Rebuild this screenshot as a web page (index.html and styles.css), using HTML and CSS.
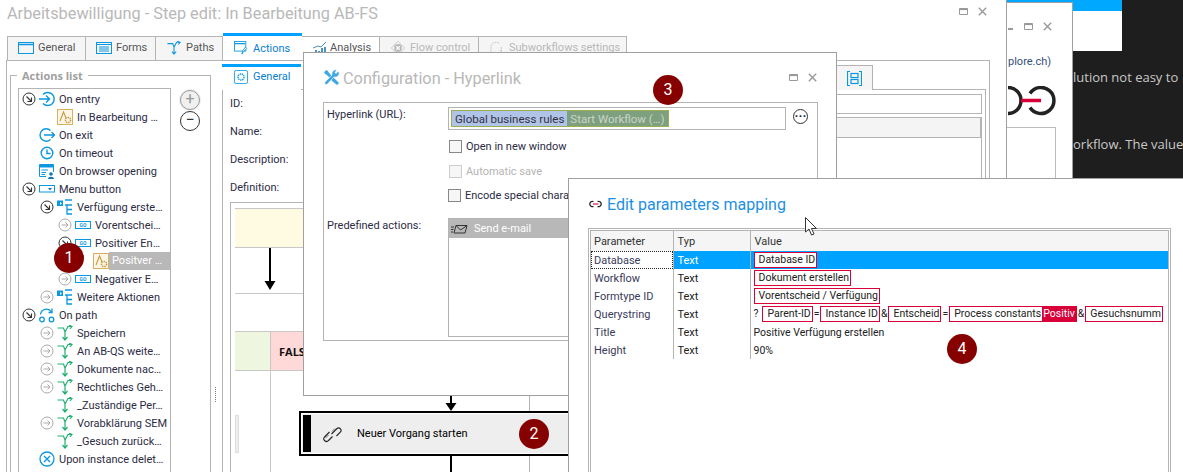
FILE: index.html
```html
<!DOCTYPE html>
<html lang="de">
<head>
    <meta charset="UTF-8">
    <title>Arbeitsbewilligung - Step edit</title>
    <link rel="stylesheet" href="styles.css">
</head>
<body>
<svg class="defs" width="0" height="0">
    <symbol id="exp" viewBox="0 0 14 14"><circle cx="7" cy="7" r="6" fill="#fff" stroke="#333" stroke-width="1"/><path d="M4.5 4.5 9.5 9.5M9.5 5.5V9.5H5.5" fill="none" stroke="#333" stroke-width="1.1"/></symbol>
    <symbol id="col" viewBox="0 0 14 14"><circle cx="7" cy="7" r="6" fill="#fff" stroke="#aaa" stroke-width="1"/><path d="M3.5 7H10M7.5 4.5 10 7 7.5 9.5" fill="none" stroke="#aaa" stroke-width="1"/></symbol>
    <symbol id="entry" viewBox="0 0 16 16"><path d="M4 3.5A6.5 6.5 0 1 1 4 12.5" fill="none" stroke="#0b98e0" stroke-width="1.4"/><path d="M0 8H10.5M7 4.5 10.5 8 7 11.5" fill="none" stroke="#0b98e0" stroke-width="1.4"/></symbol>
    <symbol id="exit" viewBox="0 0 16 16"><path d="M11.5 3.5A6.2 6.2 0 1 0 11.5 12.5" fill="none" stroke="#0b98e0" stroke-width="1.4"/><path d="M5 8H15.5M12.5 5 15.5 8 12.5 11" fill="none" stroke="#0b98e0" stroke-width="1.4"/></symbol>
    <symbol id="clock" viewBox="0 0 16 16"><circle cx="8" cy="8" r="5.8" fill="none" stroke="#0b98e0" stroke-width="1.4"/><path d="M8 4.5V8.5H11.5" fill="none" stroke="#0b98e0" stroke-width="1.4"/></symbol>
    <symbol id="browser" viewBox="0 0 16 16"><path d="M.5 1.5H14.5V9M.5 1.5V13.5H7" fill="none" stroke="#0b98e0"/><path d="M1 2H14V4.5H1Z" fill="#0b98e0"/><path d="M2.5 7H9M2.5 9.5H7M2.5 11.5H6" stroke="#0b98e0"/><circle cx="12" cy="11" r="1.8" fill="#0b78b8"/><path d="M9 16C9 13 15 13 15 16Z" fill="#0b78b8"/></symbol>
    <symbol id="menu" viewBox="0 0 16 8"><rect x=".5" y=".5" width="15" height="6.5" fill="none" stroke="#0b98e0"/><path d="M9 3H13L11 5.5Z" fill="#0b78b8"/></symbol>
    <symbol id="mbar" viewBox="0 0 16 16"><path d="M0 1.5H6V7H0" fill="#0b98e0"/><path d="M3 3 5 4.5 3 6Z" fill="#fff"/><path d="M8 1H15M8 6H15M10 6V15H15M10 10.5H15" fill="none" stroke="#0b98e0" stroke-width="1.3"/></symbol>
    <symbol id="path" viewBox="0 0 16 16"><path d="M.5 3H6.5L8 7V15M5.5 12 8 15 10.5 12M8 7 11 1.5H14M12 0 15 1.5 13 4" fill="none" stroke="currentColor" stroke-width="1.2"/></symbol>
    <symbol id="onpath" viewBox="0 0 16 16"><path d="M1.5 7.5A6 6 0 0 1 12.5 5M9.5 5.5H13V1.5" fill="none" stroke="#0b98e0" stroke-width="1.3"/><circle cx="3" cy="12.5" r="2.3" fill="none" stroke="#0b98e0" stroke-width="1.3"/><circle cx="12.5" cy="12.5" r="2.3" fill="none" stroke="#0b98e0" stroke-width="1.3"/></symbol>
    <symbol id="form" viewBox="0 0 16 16"><rect x=".5" y=".5" width="15" height="15" fill="#fdf6e8" stroke="#d9b060"/><path d="M3 12 6.5 3 9 9" fill="none" stroke="#c99a3e" stroke-width="1.1"/><circle cx="11" cy="11" r="2.6" fill="none" stroke="#c99a3e" stroke-width="1.5" stroke-dasharray="1.5 .8"/></symbol>
    <symbol id="link" viewBox="0 0 20 18"><path d="M8 7 3 12A2.5 2.5 0 0 0 7 15.5L11 11.5M10 9 15.5 3.5A2.5 2.5 0 0 1 19 7L15 11" transform="translate(-.5 0)" fill="none" stroke="#222" stroke-width="1.1"/><path d="M6.5 10 3.5 13M10 6.5 13 3.5" fill="none" stroke="#222" stroke-width=".6"/></symbol>
    <symbol id="chain" viewBox="0 0 15 8"><path d="M5.5 1.5A2.7 2.7 0 1 0 5.5 6.5M9.5 1.5A2.7 2.7 0 1 1 9.5 6.5" fill="none" stroke="#222" stroke-width="1.3"/><path d="M5 4H10.5" stroke="#d9003a" stroke-width="1.1"/></symbol>
    <symbol id="maxi" viewBox="0 0 9 7"><path d="M.5.5H8.5V6.5H.5Z" fill="none" stroke="#999"/><path d="M0 1.5H9" stroke="#999" stroke-width="1.2"/></symbol>
    <symbol id="close" viewBox="0 0 9 9"><path d="M.8.8 8.2 8.2M8.2.8.8 8.2" stroke="#999" stroke-width="1.4"/></symbol>
</svg>

<div class="desktop">
    <!-- window behind, mostly hidden -->
    <div class="back-strip"><div class="back-blue"></div></div>
    <p class="dark-text dt1">lution not easy to</p>
    <p class="dark-text dt2">orkflow. The value</p>

    <div class="win win-back">
        <div class="win-btns"><span class="mini"></span><svg class="ic-max"><use href="#maxi"/></svg><svg class="ic-close"><use href="#close"/></svg></div>
        <div class="back-url">plore.ch)</div>
        <svg class="big-chain" viewBox="0 0 50 30"><path d="M0 1.5A13 13 0 0 1 0 27.5M22 7.5A13 13 0 1 1 22 21.5" fill="none" stroke="#222" stroke-width="3.5"/><path d="M13 14.5H33" stroke="#d9003a" stroke-width="3.5"/></svg>
        <div class="back-box"></div>
    </div>

    <div class="win win-main">
        <h1 class="main-title">Arbeitsbewilligung - Step edit: In Bearbeitung AB-FS</h1>
        <div class="win-btns main-btns"><svg class="ic-max"><use href="#maxi"/></svg><svg class="ic-close"><use href="#close"/></svg></div>
        <div class="tabs">
            <div class="tab t-general"><svg class="tab-ic" viewBox="0 0 16 12"><rect x=".5" y=".5" width="15" height="11" fill="none" stroke="#0b98e0"/><path d="M1 2.5H15" stroke="#0b98e0" stroke-width="1.5"/></svg>General</div>
            <div class="tab t-forms"><svg class="tab-ic" viewBox="0 0 16 12"><rect x=".5" y=".5" width="15" height="11" fill="none" stroke="#0b98e0"/><path d="M1 2.5H15M3 5H13M3 7H13M3 9H13" stroke="#0b98e0"/></svg>Forms</div>
            <div class="tab t-paths"><svg class="tab-ic blue" viewBox="0 0 16 16"><use href="#path"/></svg>Paths</div>
            <div class="tab t-actions active"><svg class="tab-ic" viewBox="0 0 16 16"><rect x=".5" y=".5" width="13" height="11" fill="none" stroke="#0b98e0"/><path d="M1 3H13" stroke="#0b98e0" stroke-width="1.5"/><path d="M9 15 10 11 13 7 14.5 8.5 11 12Z" fill="#fff" stroke="#0b98e0"/></svg>Actions</div>
            <div class="tab t-analysis"><svg class="tab-ic" viewBox="0 0 16 14"><path d="M1 14V11M4 14V9M7 14V10M10 14V7M13 14V6" stroke="#4a90c0" stroke-width="2"/><path d="M1 7 6 5 9 6 14 1" fill="none" stroke="#4a90c0"/></svg>Analysis</div>
            <div class="tab t-flow off"><svg class="tab-ic" viewBox="0 0 16 16"><path d="M8 .5 15.5 8 8 15.5.5 8Z" fill="#fff" stroke="#bbb"/><circle cx="8" cy="8" r="4.5" fill="#bbb"/><path d="M6 6 10 10M10 6 6 10" stroke="#fff" stroke-width="1.3"/></svg>Flow control</div>
            <div class="tab t-sub off"><svg class="tab-ic" viewBox="0 0 16 16"><path d="M1 12V7A6 6 0 0 1 11 3M13 7V13M11 10 14 13M4 15H9" fill="none" stroke="#bbb" stroke-dasharray="2 1"/></svg>Subworkflows settings</div>
        </div>

        <div class="main-body">
            <div class="left-col">
                <fieldset class="actions-box">
                    <legend>Actions list</legend>
                    <div class="tree-wrap">
                        <ul class="tree">
                            <li class="l0"><svg class="ex"><use href="#exp"/></svg><svg class="ic"><use href="#entry"/></svg>On entry</li>
                            <li class="l1"><i class="ex"></i><svg class="ic"><use href="#form"/></svg>In Bearbeitung …</li>
                            <li class="l0"><i class="ex"></i><svg class="ic"><use href="#exit"/></svg>On exit</li>
                            <li class="l0"><i class="ex"></i><svg class="ic"><use href="#clock"/></svg>On timeout</li>
                            <li class="l0"><i class="ex"></i><svg class="ic"><use href="#browser"/></svg>On browser opening</li>
                            <li class="l0"><svg class="ex"><use href="#exp"/></svg><svg class="ic flat"><use href="#menu"/></svg>Menu button</li>
                            <li class="l1"><svg class="ex"><use href="#exp"/></svg><svg class="ic"><use href="#mbar"/></svg>Verfügung erste…</li>
                            <li class="l2"><svg class="ex"><use href="#col"/></svg><span class="go">GO</span>Vorentschei…</li>
                            <li class="l2"><svg class="ex"><use href="#exp"/></svg><span class="go">GO</span>Positiver En…</li>
                            <li class="l3"><i class="ex"></i><svg class="ic"><use href="#form"/></svg><span class="sel">Positver …</span></li>
                            <li class="l2"><svg class="ex"><use href="#col"/></svg><span class="go">GO</span>Negativer E…</li>
                            <li class="l1"><svg class="ex"><use href="#col"/></svg><svg class="ic"><use href="#mbar"/></svg>Weitere Aktionen</li>
                            <li class="l0"><svg class="ex"><use href="#exp"/></svg><svg class="ic"><use href="#onpath"/></svg>On path</li>
                            <li class="l1"><svg class="ex"><use href="#col"/></svg><svg class="ic"><use href="#path"/></svg>Speichern</li>
                            <li class="l1"><svg class="ex"><use href="#col"/></svg><svg class="ic"><use href="#path"/></svg>An AB-QS weite…</li>
                            <li class="l1"><svg class="ex"><use href="#col"/></svg><svg class="ic"><use href="#path"/></svg>Dokumente nac…</li>
                            <li class="l1"><svg class="ex"><use href="#col"/></svg><svg class="ic"><use href="#path"/></svg>Rechtliches Geh…</li>
                            <li class="l1"><i class="ex"></i><svg class="ic"><use href="#path"/></svg>_Zuständige Per…</li>
                            <li class="l1"><svg class="ex"><use href="#col"/></svg><svg class="ic"><use href="#path"/></svg>Vorabklärung SEM</li>
                            <li class="l1"><i class="ex"></i><svg class="ic"><use href="#path"/></svg>_Gesuch zurück…</li>
                            <li class="l0"><i class="ex"></i><svg class="ic" viewBox="0 0 16 16"><circle cx="8" cy="8" r="7" fill="none" stroke="#0b98e0" stroke-width="1.3"/><path d="M5 5 11 11M11 5 5 11" stroke="#0b98e0" stroke-width="1.4"/></svg>Upon instance delet…</li>
                        </ul>
                        <div class="tree-btns">
                            <div class="round-btn hot">+</div>
                            <div class="round-btn">−</div>
                        </div>
                    </div>
                </fieldset>
                <div class="splitter"></div>
            </div>

            <div class="right-col">
                <div class="subtabs">
                    <div class="subtab"><svg class="tab-ic" viewBox="0 0 16 16"><rect x=".5" y=".5" width="15" height="15" rx="2" fill="none" stroke="#0b98e0"/><circle cx="8" cy="8" r="3.5" fill="none" stroke="#0b98e0" stroke-width="1.6" stroke-dasharray="1.6 .8"/></svg>General</div>
                    <div class="subtab-gap"></div>
                    <div class="subtab-end"><svg viewBox="0 0 15 15" width="15" height="15"><path d="M3 .5H.5V14.5H3M12 .5H14.5V14.5H12" fill="none" stroke="#0b98e0" stroke-width="1.2"/><rect x="4" y="2.5" width="7" height="4" fill="none" stroke="#0b98e0" stroke-width="1.2"/><rect x="4" y="8.5" width="7" height="4" fill="none" stroke="#0b98e0" stroke-width="1.2"/></svg></div>
                    <div class="subtab-rest"></div>
                </div>
                <div class="sub-panel">
                    <div class="field-right"><div class="id-input"></div><div class="grey-head"></div><div class="grey-body"></div></div>
                    <div class="labels">
                        <span>ID:</span>
                        <span>Name:</span>
                        <span>Description:</span>
                        <span>Definition:</span>
                    </div>
                    <div class="definition">
                        <div class="d-yellow"></div>
                        <svg class="d-arrow" viewBox="0 0 12 45"><path d="M6 0V36" stroke="#000" stroke-width="2"/><path d="M.5 33H11.5L6 42Z"/></svg>
                        <div class="d-row"></div>
                        <div class="d-cells"><div class="d-green"></div><div class="d-pink">FALSE</div></div>
                        <div class="d-lower"><div class="d-left"><div class="d-stub"></div></div><div class="d-right"></div></div>
                    </div>
                </div>
            </div>
        </div>
        <svg class="node-arrow-in" viewBox="0 0 12 17"><path d="M6 0V10" stroke="#000" stroke-width="2"/><path d="M.5 8H11.5L6 16Z"/></svg>
        <div class="node">
            <div class="node-bar"></div>
            <svg class="node-ic"><use href="#link"/></svg>
            <span>Neuer Vorgang starten</span>
        </div>
        <div class="node-line"></div>
    </div>

    <div class="win win-config">
        <div class="cfg-head">
            <svg class="cfg-ic" viewBox="0 0 17 17"><path d="M2 2 4 1 7 5 12 10 16 14 14 16 9 12 5 7 1 4Z" fill="#3fa7e4"/><path d="M15.5 2 13 4.5 12 3.5 14 1A4 4 0 0 0 9 6L2 13 1.5 15 4 15.5 11 8A4 4 0 0 0 15.5 2Z" fill="#3fa7e4" stroke="#fff" stroke-width=".6"/></svg>
            <h2>Configuration - Hyperlink</h2>
            <div class="win-btns"><svg class="ic-max"><use href="#maxi"/></svg><svg class="ic-close"><use href="#close"/></svg></div>
        </div>
        <div class="cfg-box">
            <div class="cfg-row">
                <label class="cfg-label">Hyperlink (URL):</label>
                <div class="cfg-input"><span class="chips"><span class="chip-blue">Global business rules</span><span class="chip-green">Start Workflow (…)</span></span></div>
                <div class="dots">···</div>
            </div>
            <div class="check first"><i class="box"></i>Open in new window</div>
            <div class="check dis"><i class="box"></i>Automatic save</div>
            <div class="check enc"><i class="box"></i>Encode special characters</div>
            <div class="cfg-row pre">
                <label class="cfg-label">Predefined actions:</label>
                <div class="pre-list"><div class="pre-sel"><svg class="mail" viewBox="0 0 17 10"><path d="M5 1.5H16L14 9H3ZM5 1.5 9.5 6 16 1.5M0 3H3M0 5.5H2.5M0 8H2" fill="none" stroke="#333"/></svg>Send e-mail</div></div>
            </div>
        </div>
    </div>

    <div class="win win-edit">
        <div class="edit-head">
            <svg class="chain-ic"><use href="#chain"/></svg>
            <h2>Edit parameters mapping</h2>
        </div>
        <div class="grid-wrap">
            <div class="grid-inner">
                <table class="grid">
                    <thead><tr><th class="c1">Parameter</th><th class="c2">Typ</th><th class="c3">Value</th></tr></thead>
                    <tbody>
                        <tr class="row-sel"><td class="c1 focus">Database</td><td>Text</td><td><span class="t">Database ID</span></td></tr>
                        <tr><td>Workflow</td><td>Text</td><td><span class="t">Dokument erstellen</span></td></tr>
                        <tr><td>Formtype ID</td><td>Text</td><td><span class="t">Vorentscheid / Verfügung</span></td></tr>
                        <tr><td>Querystring</td><td>Text</td><td>?<span class="t q">Parent-ID</span>=<span class="t q">Instance ID</span>&amp;<span class="t q">Entscheid</span>=<span class="t q">Process constants<b>Positiv</b></span>&amp;<span class="t q">Gesuchsnumm</span></td></tr>
                        <tr><td>Title</td><td>Text</td><td>Positive Verfügung erstellen</td></tr>
                        <tr><td>Height</td><td>Text</td><td>90%</td></tr>
                    </tbody>
                </table>
            </div>
        </div>
    </div>

    <svg class="cursor" viewBox="0 0 13 19"><path d="M.5.5V15L4 12 6.5 18 9 17 6.5 11.5H11.5Z" fill="#fff" stroke="#333"/></svg>

    <div class="badge b1">1</div>
    <div class="badge b2">2</div>
    <div class="badge b3">3</div>
    <div class="badge b4">4</div>
</div>
</body>
</html>
```

FILE: styles.css
```css
* {
    margin: 0;
    padding: 0;
    box-sizing: border-box;
}

html, body {
    background: #fff;
}

body {
    font-family: Roboto, "Noto Sans", sans-serif;
    font-size: 11px;
    color: #2c2c44;
    overflow: hidden;
}

.defs {
    position: absolute;
}

.desktop {
    position: relative;
    width: 1183px;
    height: 472px;
    overflow: hidden;
}

/* dark page behind the windows */
.back-strip {
    position: absolute;
    left: 1007px;
    top: 0;
    width: 176px;
    height: 178px;
    background: #1e1e1e;
}

.back-blue {
    width: 115px;
    height: 51px;
    background: #fff;
    border-top: 11px solid #00a8ff;
}

.dark-text {
    position: absolute;
    left: 1073px;
    font-family: "Open Sans", sans-serif;
    font-size: 13px;
    color: #c8c8c8;
    white-space: nowrap;
}

.dt1 { top: 68px; }
.dt2 { top: 135px; }

.win {
    position: absolute;
    background: #fff;
    border: 1px solid #a0a0a0;
}

.win-btns {
    display: flex;
    gap: 10px;
    align-items: center;
}

.ic-max {
    width: 9px;
    height: 7px;
}

.ic-close {
    width: 9px;
    height: 9px;
}

/* window 2, behind main */
.win-back {
    left: 1006px;
    top: 2px;
    width: 67px;
    height: 177px;
    padding: 19px 0 0 0;
}

.win-back .win-btns {
    padding-left: 17px;
    height: 9px;
}

.mini {
    position: absolute;
    left: 1px;
    top: 25px;
    width: 5px;
    height: 2px;
    background: #999;
}

.back-url {
    margin-top: 24px;
    margin-left: 1px;
    height: 13px;
    line-height: 13px;
    color: #33507a;
}

.big-chain {
    display: block;
    width: 50px;
    height: 30px;
    margin-top: 18px;
    margin-left: 1px;
}

.back-box {
    width: 49px;
    height: 60px;
    margin-top: 11px;
    border: 1px solid #bbb;
    border-left: 0;
}

/* main window */
.win-main {
    left: -1px;
    top: -1px;
    width: 1008px;
    height: 480px;
    border-top: 0;
    border-left: 0;
    padding-top: 1px;
}

.main-title {
    font-size: 16.3px;
    font-weight: 400;
    color: #b8b8b8;
    height: 34px;
    padding: 3px 0 0 8px;
    line-height: 22px;
}

.main-btns {
    position: absolute;
    left: 960px;
    top: 8px;
}

.tabs {
    display: flex;
    padding-left: 8px;
    height: 26px;
    align-items: flex-end;
}

.tab {
    display: flex;
    align-items: center;
    height: 24px;
    padding-bottom: 2px;
    border: 1px solid #b4b4b4;
    border-bottom: 0;
    border-left: 0;
    background: #f5f5f5;
    color: #555;
}

.tab:first-child {
    border-left: 1px solid #b4b4b4;
}

.tab-ic {
    width: 16px;
    height: 14px;
    margin: 0 4px 0 10px;
    flex: none;
}

.blue {
    color: #0b98e0;
}

.t-general { width: 79px; }
.t-forms { width: 70px; }
.t-paths { width: 67px; }
.t-actions { width: 79px; }
.t-analysis { width: 78px; background: #fff; }
.t-analysis .tab-ic { margin-right: 2px; }
.t-flow { width: 99px; }
.t-sub { width: 148px; }

.tab.active {
    height: 27px;
    padding-bottom: 0;
    background: #fff;
    border: 0;
    border-top: 3px solid #00a2ff;
    color: #0b80d0;
}

.tab.off {
    color: #b8b8b8;
}

.main-body {
    display: flex;
    margin-left: 7px;
    width: 984px;
    height: 420px;
    border: 1px solid #b4b4b4;
    border-bottom: 0;
}

.left-col {
    display: flex;
    width: 215px;
    flex: none;
}

.actions-box {
    width: 201px;
    margin: 7px 0 0 3px;
    border: 1px solid #b4b4b4;
    border-bottom: 0;
    padding: 0 0 0 7px;
    flex: none;
}

.actions-box legend {
    margin-left: -1px;
    padding: 0 5px;
    font-family: "Open Sans", sans-serif;
    font-weight: 700;
    font-size: 11px;
    color: #a0a0a0;
    line-height: 15px;
}

.tree-wrap {
    display: flex;
    gap: 9px;
    margin-top: 5px;
}

.tree {
    list-style: none;
    width: 153px;
    height: 400px;
    border: 1px solid #b4b4b4;
    padding-top: 1px;
    flex: none;
}

.tree li {
    display: flex;
    align-items: center;
    height: 18px;
    white-space: nowrap;
    padding-left: 3px;
}

.tree li.l1 { padding-left: 21px; }
.tree li.l2 { padding-left: 39px; }
.tree li.l3 { padding-left: 57px; }

.tree .ex {
    width: 14px;
    height: 14px;
    flex: none;
    margin-right: 3px;
    display: block;
}

.tree .ic {
    width: 16px;
    height: 16px;
    flex: none;
    margin-right: 4px;
    color: #1fb070;
}

.tree .ic.flat {
    height: 8px;
}

.go {
    width: 16px;
    height: 8px;
    flex: none;
    margin-right: 4px;
    border: 1px solid #0b98e0;
    color: #0b98e0;
    font-size: 5px;
    font-weight: 700;
    line-height: 6px;
    text-align: center;
}

.sel {
    background: #b8b8b8;
    color: #fff;
    height: 18px;
    line-height: 18px;
    padding-left: 3px;
    flex: 1;
    margin-left: -4px;
}

.tree-btns {
    display: flex;
    flex-direction: column;
    gap: 1px;
    margin-top: 2px;
}

.round-btn {
    width: 20px;
    height: 20px;
    border: 1px solid #333;
    border-radius: 50%;
    font-size: 16px;
    line-height: 16px;
    text-align: center;
    color: #333;
}

.round-btn.hot {
    border-color: #999;
    color: #999;
    box-shadow: 0 0 0 1px #f0f0f0;
    background: #f0f0f0;
}

.splitter {
    width: 1px;
    height: 15px;
    margin: 326px 0 0 4px;
    border-left: 1px dotted #777;
}

.right-col {
    flex: 1;
    margin-top: 3px;
    position: relative;
}

.subtabs {
    display: flex;
    height: 26px;
    width: 100%;
}

.subtab {
    display: flex;
    align-items: center;
    width: 79px;
    padding-bottom: 4px;
    border-top: 3px solid #00a2ff;
    color: #0b80d0;
}

.subtab .tab-ic {
    margin-left: 11px;
    margin-right: 4px;
}

.subtab-gap {
    width: 535px;
    border-bottom: 1px solid #b4b4b4;
}

.subtab-end {
    width: 37px;
    margin-top: 1px;
    border: 1px solid #b4b4b4;
    border-bottom: 0;
    background: #f5f5f5;
    display: flex;
    align-items: center;
    justify-content: center;
}

.subtab-rest {
    flex: 1;
    margin-right: 3px;
    border-bottom: 1px solid #b4b4b4;
}

.sub-panel {
    height: 390px;
    border-left: 1px solid #b4b4b4;
    border-right: 1px solid #b4b4b4;
    margin-right: 3px;
    position: relative;
    padding: 6px 0 0 7px;
}

.field-right {
    position: absolute;
    right: 3px;
    top: 4px;
    width: 600px;
}

.id-input {
    height: 20px;
    border: 1px solid #b4b4b4;
}

.grey-head {
    height: 21px;
    margin-top: 3px;
    background: #f4f4f4;
    border: 1px solid #b4b4b4;
    border-right-width: 2px;
}

.grey-body {
    height: 60px;
    border-right: 1px solid #b4b4b4;
}

.labels {
    display: flex;
    flex-direction: column;
    gap: 13px;
    height: 100px;
}

.labels span {
    line-height: 15px;
}

.definition {
    width: 300px;
    height: 290px;
    margin-top: 6px;
    border: 1px solid #b4b4b4;
    border-bottom: 0;
    padding: 5px 0 0 4px;
    overflow: hidden;
}

.d-yellow {
    height: 40px;
    background: #fffbe2;
    border: 1px solid #c8c8c8;
    border-width: 1px 0;
}

.d-arrow {
    display: block;
    width: 12px;
    height: 45px;
    margin-left: 29px;
}

.d-row {
    height: 38px;
    border-top: 1px solid #c8c8c8;
}

.d-cells {
    display: flex;
    height: 40px;
    border: 1px solid #c8c8c8;
    border-width: 1px 0;
}

.d-green {
    width: 35px;
    background: #eef6e0;
}

.d-pink {
    flex: 1;
    background: #ffd8d8;
    border-left: 1px solid #c8c8c8;
    color: #111;
    font-family: "Open Sans", sans-serif;
    font-weight: 700;
    padding: 12px 0 0 8px;
}

.d-lower {
    display: flex;
    height: 110px;
}

.d-left {
    width: 35px;
    padding-top: 44px;
}

.d-stub {
    width: 4px;
    height: 38px;
    background: #eee;
    border: 1px solid #ddd;
}

.d-right {
    border-left: 1px solid #c8c8c8;
}

/* flow node sits over the diagram */
.node-arrow-in {
    position: absolute;
    left: 446px;
    top: 396px;
    width: 12px;
    height: 17px;
}

.node {
    position: absolute;
    left: 300px;
    top: 412px;
    width: 300px;
    height: 45px;
    background: #eee;
    border: 2px solid #000;
    box-shadow: inset 0 0 0 1px #fff;
    display: flex;
    align-items: center;
    color: #000;
}

.node-bar {
    width: 8px;
    height: 37px;
    margin-left: 2px;
    background: #000;
}

.node-ic {
    width: 20px;
    height: 18px;
    margin: 0 15px 0 11px;
}

.node-line {
    position: absolute;
    left: 451px;
    top: 457px;
    width: 2px;
    height: 20px;
    background: #000;
}

/* configuration dialog */
.win-config {
    left: 303px;
    top: 52px;
    width: 534px;
    height: 344px;
    padding: 0 19px 0 19px;
}

.cfg-head {
    display: flex;
    align-items: center;
    height: 49px;
}

.cfg-ic {
    width: 17px;
    height: 17px;
    margin-right: 3px;
}

.cfg-head h2 {
    font-size: 16.3px;
    font-weight: 400;
    color: #b8b8b8;
    flex: 1;
    margin-top: 2px;
}

.cfg-box {
    width: 495px;
    height: 239px;
    border: 1px solid #b4b4b4;
    padding: 4px 0 0 3px;
}

.cfg-row {
    display: flex;
}

.cfg-label {
    width: 121px;
    flex: none;
    padding-top: 1px;
}

.cfg-input {
    width: 338px;
    height: 23px;
    border: 1px solid #b4b4b4;
    padding: 2px;
}

.chips {
    display: inline-flex;
    border: 1px solid #9aae50;
    height: 17px;
    font-size: 11.5px;
    line-height: 16px;
}

.chip-blue {
    background: #b0c4e8;
    padding: 0 3px;
    color: #334;
}

.chip-green {
    background: #7fa07f;
    color: #c9d4c9;
    padding: 0 3px;
}

.dots {
    width: 15px;
    height: 15px;
    margin: 2px 0 0 7px;
    border: 1px solid #333;
    border-radius: 50%;
    font-size: 13px;
    font-weight: 700;
    line-height: 11px;
    text-align: center;
}

.check {
    display: flex;
    align-items: center;
    height: 25px;
    padding-left: 122px;
}

.check.first {
    margin-top: 4px;
}

.check .box {
    width: 13px;
    height: 13px;
    margin-right: 4px;
    border: 1px solid #888;
    background: #f6f6f6;
}

.check.dis {
    color: #b4b4b4;
}

.check.dis .box {
    border-color: #ccc;
}

.check.enc {
    padding-left: 121px;
    margin-top: -1px;
}

.cfg-row.pre {
    margin-top: 10px;
}

.pre-list {
    width: 340px;
    height: 119px;
    border: 1px solid #b4b4b4;
}

.pre-sel {
    display: flex;
    align-items: center;
    height: 19px;
    background: #b8b8b8;
    color: #fff;
}

.mail {
    width: 17px;
    height: 10px;
    margin: 0 6px 0 2px;
}

/* edit parameters dialog */
.win-edit {
    left: 568px;
    top: 178px;
    width: 620px;
    height: 300px;
    padding: 0 0 0 19px;
    border-right: 0;
}

.edit-head {
    display: flex;
    align-items: center;
    height: 49px;
}

.chain-ic {
    width: 15px;
    height: 8px;
    margin-right: 4px;
}

.edit-head h2 {
    font-size: 16px;
    font-weight: 400;
    color: #1b90e4;
    margin-top: 1px;
}

.grid-wrap {
    width: 583px;
    height: 260px;
    border: 1px solid #b4b4b4;
    padding: 1px;
}

.grid-inner {
    height: 100%;
    border: 1px solid #b4b4b4;
}

.grid {
    border-collapse: collapse;
    width: 577px;
    table-layout: fixed;
}

.grid th {
    height: 20px;
    background: #f5f5f5;
    font-weight: 400;
    text-align: left;
    padding-left: 4px;
    border-left: 1px solid #b4b4b4;
    color: #333;
}

.grid th:first-child {
    border-left: 0;
    padding-left: 3px;
}

.grid td {
    height: 18px;
    padding: 0 0 0 4px;
    border-left: 1px solid #b4b4b4;
    white-space: nowrap;
    color: #222;
    overflow: hidden;
}

.grid td:first-child {
    border-left: 0;
    padding-left: 3px;
    color: #3a3a5a;
}

.grid td:last-child {
    padding-left: 3px;
    font-size: 10.5px;
}

.c1 { width: 82px; }
.c2 { width: 77px; }

.row-sel td {
    background: #00a2ff;
    color: #fff;
}

.row-sel td.focus {
    background: #fff;
    color: #3a3a5a;
    outline: 1px dotted #222;
    outline-offset: -1px;
}

.t {
    display: inline-block;
    border: 1px solid #d9003a;
    height: 16px;
    line-height: 14px;
    padding: 0 1px 0 4px;
    background: #fff;
    color: #222;
}

.t.q {
    margin: 0 1px;
}

.grid td > .t.q:first-of-type {
    margin-left: 4px;
}

.t b {
    display: inline-block;
    background: #d9003a;
    color: #fff;
    font-weight: 400;
    padding: 0 1px 0 1px;
    margin-left: 1px;
    margin-right: -1px;
}

.cursor {
    position: absolute;
    left: 805px;
    top: 217px;
    width: 13px;
    height: 19px;
}

.badge {
    position: absolute;
    width: 30px;
    height: 30px;
    border-radius: 50%;
    background: #870000;
    color: #fff;
    font-size: 16px;
    line-height: 29px;
    text-align: center;
}

.b1 { left: 54px; top: 243px; }
.b2 { left: 519px; top: 419px; }
.b3 { left: 653px; top: 75px; }
.b4 { left: 947px; top: 334px; }
```
